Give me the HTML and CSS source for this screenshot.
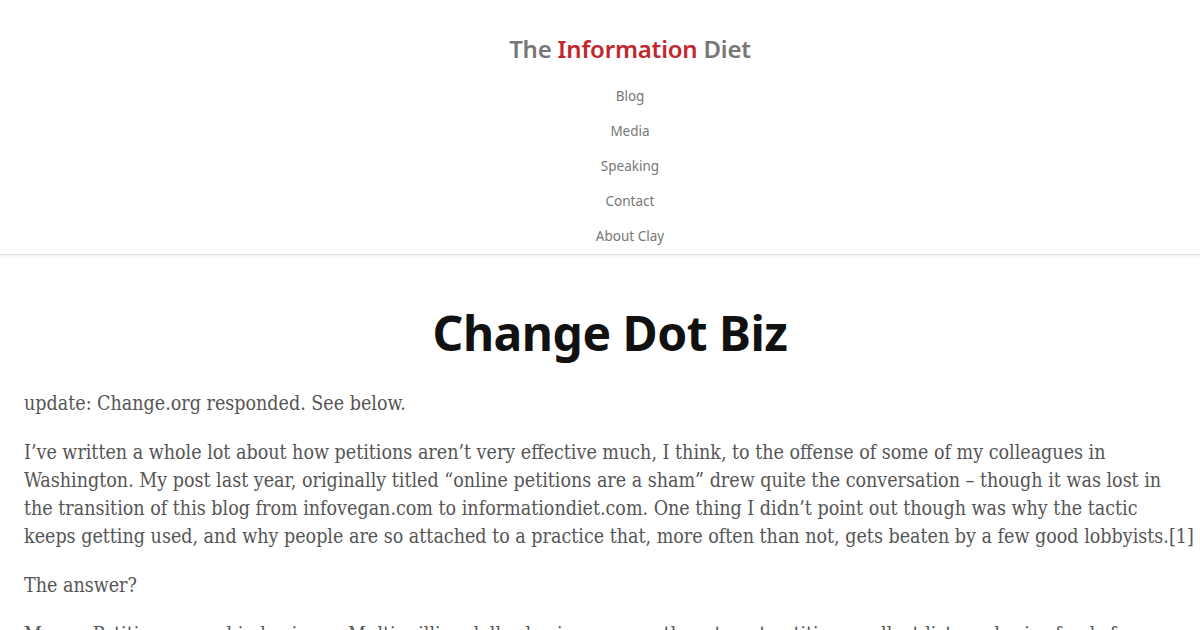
FILE: index.html
```html
<!DOCTYPE html>
<html lang="en">
<head>
<meta charset="utf-8">
<title>Change Dot Biz – The Information Diet</title>
<link rel="stylesheet" href="styles.css">
</head>
<body>
<header class="site-header">
  <div class="site-title"><span class="muted">The</span> <span class="accent">Information</span> <span class="muted">Diet</span></div>
  <nav class="site-nav">
    <a href="#">Blog</a>
    <a href="#">Media</a>
    <a href="#">Speaking</a>
    <a href="#">Contact</a>
    <a href="#">About Clay</a>
  </nav>
</header>
<main class="post">
  <h1 class="post-title">Change Dot Biz</h1>
  <p>update: Change.org responded. See below.</p>
  <p>I’ve written a whole lot about how petitions aren’t very effective much, I think, to the offense of some of my colleagues in Washington. My post last year, originally titled “online petitions are a sham” drew quite the conversation – though it was lost in the transition of this blog from infovegan.com to informationdiet.com. One thing I didn’t point out though was why the tactic keeps getting used, and why people are so attached to a practice that, more often than not, gets beaten by a few good <span class="nowrap">lobbyists.<a class="fn" href="#">[1]</a></span></p>
  <p>The answer?</p>
  <p>Money. Petitions are a big business. Multi-million dollar businesses use them to get petitions, collect lists and raise funds for causes.</p>
</main>
</body>
</html>
```

FILE: styles.css
```css
html, body {
  margin: 0;
  padding: 0;
  background: #fff;
}
body {
  font-family: "DejaVu Serif Condensed", "DejaVu Serif", serif;
  font-stretch: condensed;
  color: #555;
}
.site-header {
  display: flex;
  flex-direction: column;
  align-items: center;
  padding: 33px 0 0 60px;
  border-bottom: 1px solid #e2e2e2;
  box-shadow: 0 1px 3px rgba(0,0,0,0.08);
}
.site-title {
  font-family: "Noto Sans", "Open Sans", sans-serif;
  font-stretch: normal;
  font-weight: 600;
  font-size: 24px;
  line-height: 32px;
  letter-spacing: -0.2px;
}
.site-title .muted { color: #777; }
.site-title .accent { color: #c1272d; }
.site-nav {
  display: flex;
  flex-direction: column;
  align-items: center;
  margin-top: 14px;
}
.site-nav a {
  font-family: "Noto Sans", "Open Sans", sans-serif;
  font-stretch: normal;
  font-size: 13.5px;
  line-height: 35px;
  color: #777;
  text-decoration: none;
}
.post {
  padding: 0 20px 0 24px;
}
.post-title {
  font-family: "Noto Sans", "Open Sans", sans-serif;
  font-stretch: normal;
  font-weight: 700;
  font-size: 48px;
  line-height: 60px;
  color: #111;
  text-align: center;
  margin: 48px 0 27px;
  padding-left: 16px;
  letter-spacing: -0.5px;
}
.post p {
  font-size: 19.5px;
  line-height: 28px;
  margin: 0 0 21px;
}
.post .nowrap {
  white-space: nowrap;
}
.post .fn {
  color: inherit;
  text-decoration: none;
  display: inline-block;
  margin-right: -40px;
}
```
